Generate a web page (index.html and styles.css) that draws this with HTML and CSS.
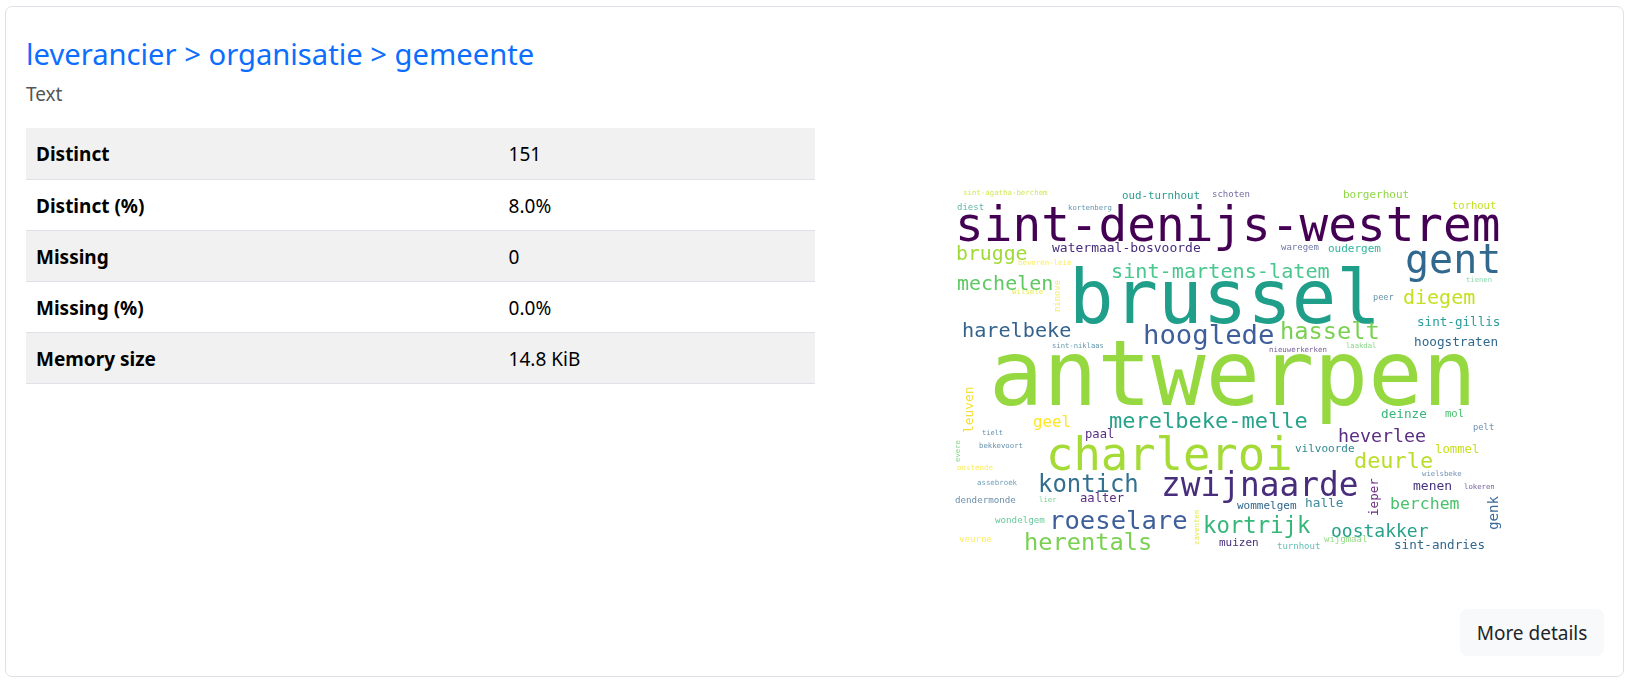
FILE: index.html
```html
<!DOCTYPE html>
<html lang="en">
<head>
    <meta charset="UTF-8">
    <title>leverancier > organisatie > gemeente</title>
    <link rel="stylesheet" href="styles.css">
</head>
<body>
<div class="card">
    <div class="variable">
        <div class="info">
            <h2 class="name"><a href="#">leverancier &gt; organisatie &gt; gemeente</a></h2>
            <p class="type">Text</p>
            <table class="stats">
                <tr><th>Distinct</th><td>151</td></tr>
                <tr><th>Distinct (%)</th><td>8.0%</td></tr>
                <tr><th>Missing</th><td>0</td></tr>
                <tr><th>Missing (%)</th><td>0.0%</td></tr>
                <tr><th>Memory size</th><td>14.8 KiB</td></tr>
            </table>
        </div>
        <svg class="cloud" viewBox="950 180 560 376" width="560" height="376">
            <g class="tiny">
                <text x="963" y="195" font-size="7.4" fill="#c8e020">sint-agatha-berchem</text>
                <text x="1212" y="197" font-size="9" fill="#443983">schoten</text>
                <text x="957" y="210" font-size="9" fill="#2a9d8c">diest</text>
                <text x="1068" y="210" font-size="7.3" fill="#2d708e">kortenberg</text>
                <text x="1281" y="250" font-size="9" fill="#3e4989">waregem</text>
                <text x="1018" y="265" font-size="7.4" fill="#fde725">beveren-leie</text>
                <text x="1466" y="282" font-size="7.2" fill="#5ec98c">tienen</text>
                <text x="1012" y="294" font-size="7.4" fill="#dde318">wilsele</text>
                <text x="1060" y="312" font-size="8.9" fill="#f0e442" transform="rotate(-90 1060 312)">ninove</text>
                <text x="1373" y="300" font-size="8.6" fill="#35708e">peer</text>
                <text x="1052" y="348" font-size="7.2" fill="#2d708e">sint-niklaas</text>
                <text x="1269" y="352" font-size="7.4" fill="#482878">nieuwerkerken</text>
                <text x="1346" y="348" font-size="7.2" fill="#5ec962">laakdal</text>
                <text x="1473" y="430" font-size="8.8" fill="#3e6a9a">pelt</text>
                <text x="982" y="435" font-size="7" fill="#31688e">tielt</text>
                <text x="979" y="448" font-size="7.3" fill="#31688e">bekkevoort</text>
                <text x="960" y="462" font-size="7.3" fill="#5ec962" transform="rotate(-90 960 462)">evere</text>
                <text x="957" y="470" font-size="7.5" fill="#fde725">oostende</text>
                <text x="1422" y="476" font-size="7.3" fill="#3e6a9a">wielsbeke</text>
                <text x="977" y="485" font-size="7.4" fill="#3f7e9e">assebroek</text>
                <text x="1464" y="489" font-size="7.3" fill="#482878">lokeren</text>
                <text x="955" y="503" font-size="9.2" fill="#3a6a8f">dendermonde</text>
                <text x="1039" y="502" font-size="7.3" fill="#4ac16d">lier</text>
                <text x="995" y="523" font-size="9.2" fill="#35b779">wondelgem</text>
                <text x="1199" y="545" font-size="7.3" fill="#dde318" transform="rotate(-90 1199 545)">zaventem</text>
                <text x="959" y="542" font-size="9.1" fill="#fde725">veurne</text>
                <text x="1324" y="542" font-size="9" fill="#6ece58">wijgmaal</text>
                <text x="1277" y="549" font-size="9" fill="#2fa8a0">turnhout</text>
            </g>
            <text x="1122" y="199" font-size="10.8" fill="#2a9d8f">oud-turnhout</text>
            <text x="1343" y="198" font-size="11" fill="#8fd744">borgerhout</text>
            <text x="1452" y="209" font-size="10.5" fill="#c2df23">torhout</text>
            <text x="955" y="241" font-size="47.7" fill="#440154">sint-denijs-westrem</text>
            <text x="956" y="260" font-size="19.8" fill="#a0da39">brugge</text>
            <text x="1052" y="252" font-size="13" fill="#472d7b">watermaal-bosvoorde</text>
            <text x="1328" y="252" font-size="11" fill="#2fb49c">oudergem</text>
            <text x="1405" y="273" font-size="40" fill="#31688e">gent</text>
            <text x="1111" y="278" font-size="20.2" fill="#48c78e">sint-martens-latem</text>
            <text x="957" y="290" font-size="20" fill="#5ec962">mechelen</text>
            <text x="1403" y="304" font-size="20" fill="#c5e021">diegem</text>
            <text x="1069" y="323" font-size="74" fill="#1f9e89">brussel</text>
            <text x="1417" y="326" font-size="12.6" fill="#2a9d9a">sint-gillis</text>
            <text x="962" y="337" font-size="20.2" fill="#33638d">harelbeke</text>
            <text x="1143" y="344" font-size="27.3" fill="#3e5f9a">hooglede</text>
            <text x="1280" y="339" font-size="23.7" fill="#7ad151">hasselt</text>
            <text x="1414" y="346" font-size="12.7" fill="#31688e">hoogstraten</text>
            <text x="989" y="405" font-size="90" fill="#95d840">antwerpen</text>
            <text x="973" y="433" font-size="12.9" fill="#f5e030" transform="rotate(-90 973 433)">leuven</text>
            <text x="1033" y="427" font-size="15.8" fill="#fde725">geel</text>
            <text x="1109" y="428" font-size="22" fill="#27a28a">merelbeke-melle</text>
            <text x="1381" y="418" font-size="12.7" fill="#35b779">deinze</text>
            <text x="1445" y="417" font-size="10.5" fill="#4ac16d">mol</text>
            <text x="1085" y="438" font-size="12.2" fill="#5a2d82">paal</text>
            <text x="1338" y="442" font-size="18.3" fill="#5a2d82">heverlee</text>
            <text x="1295" y="452" font-size="11" fill="#31888e">vilvoorde</text>
            <text x="1435" y="453" font-size="12.3" fill="#c8e020">lommel</text>
            <text x="1046" y="470" font-size="45.5" fill="#a5db36">charleroi</text>
            <text x="1354" y="468" font-size="21.9" fill="#b8de29">deurle</text>
            <text x="1413" y="490" font-size="13" fill="#46327e">menen</text>
            <text x="1038" y="492" font-size="23.9" fill="#33708f">kontich</text>
            <text x="1161" y="496" font-size="32.8" fill="#472d7b">zwijnaarde</text>
            <text x="1378" y="516" font-size="12.6" fill="#6a2a80" transform="rotate(-90 1378 516)">ieper</text>
            <text x="1498" y="530" font-size="14.2" fill="#3e6a9a" transform="rotate(-90 1498 530)">genk</text>
            <text x="1080" y="502" font-size="12.2" fill="#5a2d82">aalter</text>
            <text x="1305" y="507" font-size="12.8" fill="#3f8a9a">halle</text>
            <text x="1237" y="509" font-size="11" fill="#31688e">wommelgem</text>
            <text x="1390" y="509" font-size="16.5" fill="#4ac16d">berchem</text>
            <text x="1049" y="529" font-size="25.6" fill="#3e5f9a">roeselare</text>
            <text x="1203" y="533" font-size="22.3" fill="#35b779">kortrijk</text>
            <text x="1331" y="537" font-size="18" fill="#27a28a">oostakker</text>
            <text x="1219" y="546" font-size="11" fill="#472d7b">muizen</text>
            <text x="1024" y="550" font-size="23.7" fill="#7ad151">herentals</text>
            <text x="1394" y="549" font-size="12.6" fill="#31688e">sint-andries</text>
        </svg>
    </div>
    <div class="actions">
        <button class="details" type="button">More details</button>
    </div>
</div>
</body>
</html>
```

FILE: styles.css
```css
* {
    margin: 0;
    padding: 0;
    box-sizing: border-box;
}

html, body {
    height: 100%;
}

body {
    padding: 6px 4px 5px 5px;
    background: #fff;
    color: #000;
    font-family: "Noto Sans", "Open Sans", sans-serif;
    font-size: 19px;
}

.card {
    display: flex;
    flex-direction: column;
    height: 100%;
    padding: 0 19px 20px 20px;
    border: 1px solid #dee2e6;
    border-radius: 7px;
}

.variable {
    display: flex;
    flex: 1;
    justify-content: space-between;
}

.info {
    width: 789px;
    padding-top: 28px;
}

.name {
    font-size: 29.2px;
    font-weight: 400;
    line-height: 38px;
}

.name a {
    color: #0d6efd;
    text-decoration: none;
}

.type {
    margin-top: 6px;
    margin-bottom: 19px;
    color: #555;
    line-height: 30px;
}

.stats {
    width: 100%;
    border-collapse: collapse;
}

.stats tr {
    height: 51px;
    border-bottom: 1px solid #dee2e6;
}

.stats tr:nth-child(odd) {
    background: #f1f1f1;
}

.stats th, .stats td {
    padding: 2px 10px 0;
    text-align: left;
}

.stats th {
    width: 59.9%;
    font-weight: 700;
}

.cloud {
    margin-top: 173px;
    margin-right: 94px;
    font-family: "DejaVu Sans Mono", "Liberation Mono", monospace;
    filter: blur(0.7px);
}

.tiny {
    opacity: 0.75;
}

.actions {
    display: flex;
    justify-content: flex-end;
}

.details {
    width: 144px;
    height: 47px;
    border: 0;
    border-radius: 7px;
    background: #f8f9fa;
    color: #212529;
    font-family: inherit;
    font-size: 19px;
}
```
